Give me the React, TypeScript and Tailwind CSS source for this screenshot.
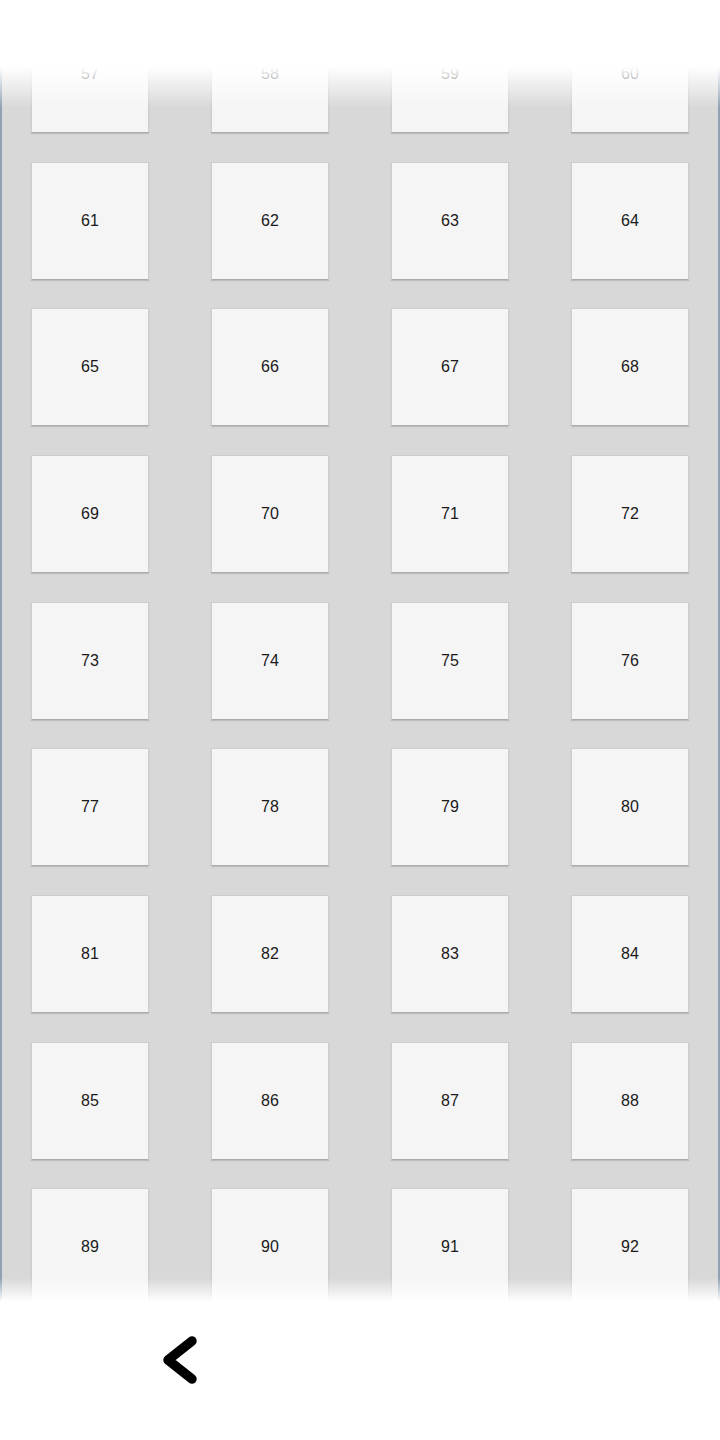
import React from "react";

const first = 57;
const numbers = Array.from({ length: 40 }, (_, i) => first + i);

function Tile({ n }: { n: number }) {
  return (
    <div className="flex h-[118px] w-[118px] items-center justify-center border border-[#cdcdcd] border-b-[#ababab] bg-[#f5f5f5] text-[16px] text-[#1a1a1a] shadow-[0_1px_1px_rgba(0,0,0,0.12)]">
      {n}
    </div>
  );
}

export default function App() {
  return (
    <div
      className="relative h-[1440px] w-[720px] overflow-hidden bg-white"
      style={{ fontFamily: '"Liberation Sans", Arial, sans-serif' }}
    >
      <div className="h-full border-x-2 border-x-[#8fa2b4] bg-[#d8d8d8]">
        <div className="grid grid-cols-[118px_118px_118px_118px] justify-between gap-y-[28.67px] px-[29px] pt-[15px]">
          {numbers.map((n) => (
            <Tile key={n} n={n} />
          ))}
        </div>
      </div>

      {/* top fade */}
      <div className="absolute inset-x-0 top-0 h-[108px] bg-gradient-to-b from-white from-[62%] to-white/0" />

      {/* bottom bar */}
      <div className="absolute inset-x-0 bottom-0 flex h-[162px] flex-col">
        <div className="h-[24px] bg-gradient-to-t from-white to-white/0" />
        <div className="flex flex-1 items-start bg-white pl-[155px] pt-[28px]">
          <button className="block">
            <svg width="50" height="60" viewBox="0 0 50 60">
              <path
                d="M37 11 L13 30 L37 49"
                fill="none"
                stroke="#000"
                strokeWidth="9.5"
                strokeLinecap="round"
                strokeLinejoin="round"
              />
            </svg>
          </button>
        </div>
      </div>
    </div>
  );
}
